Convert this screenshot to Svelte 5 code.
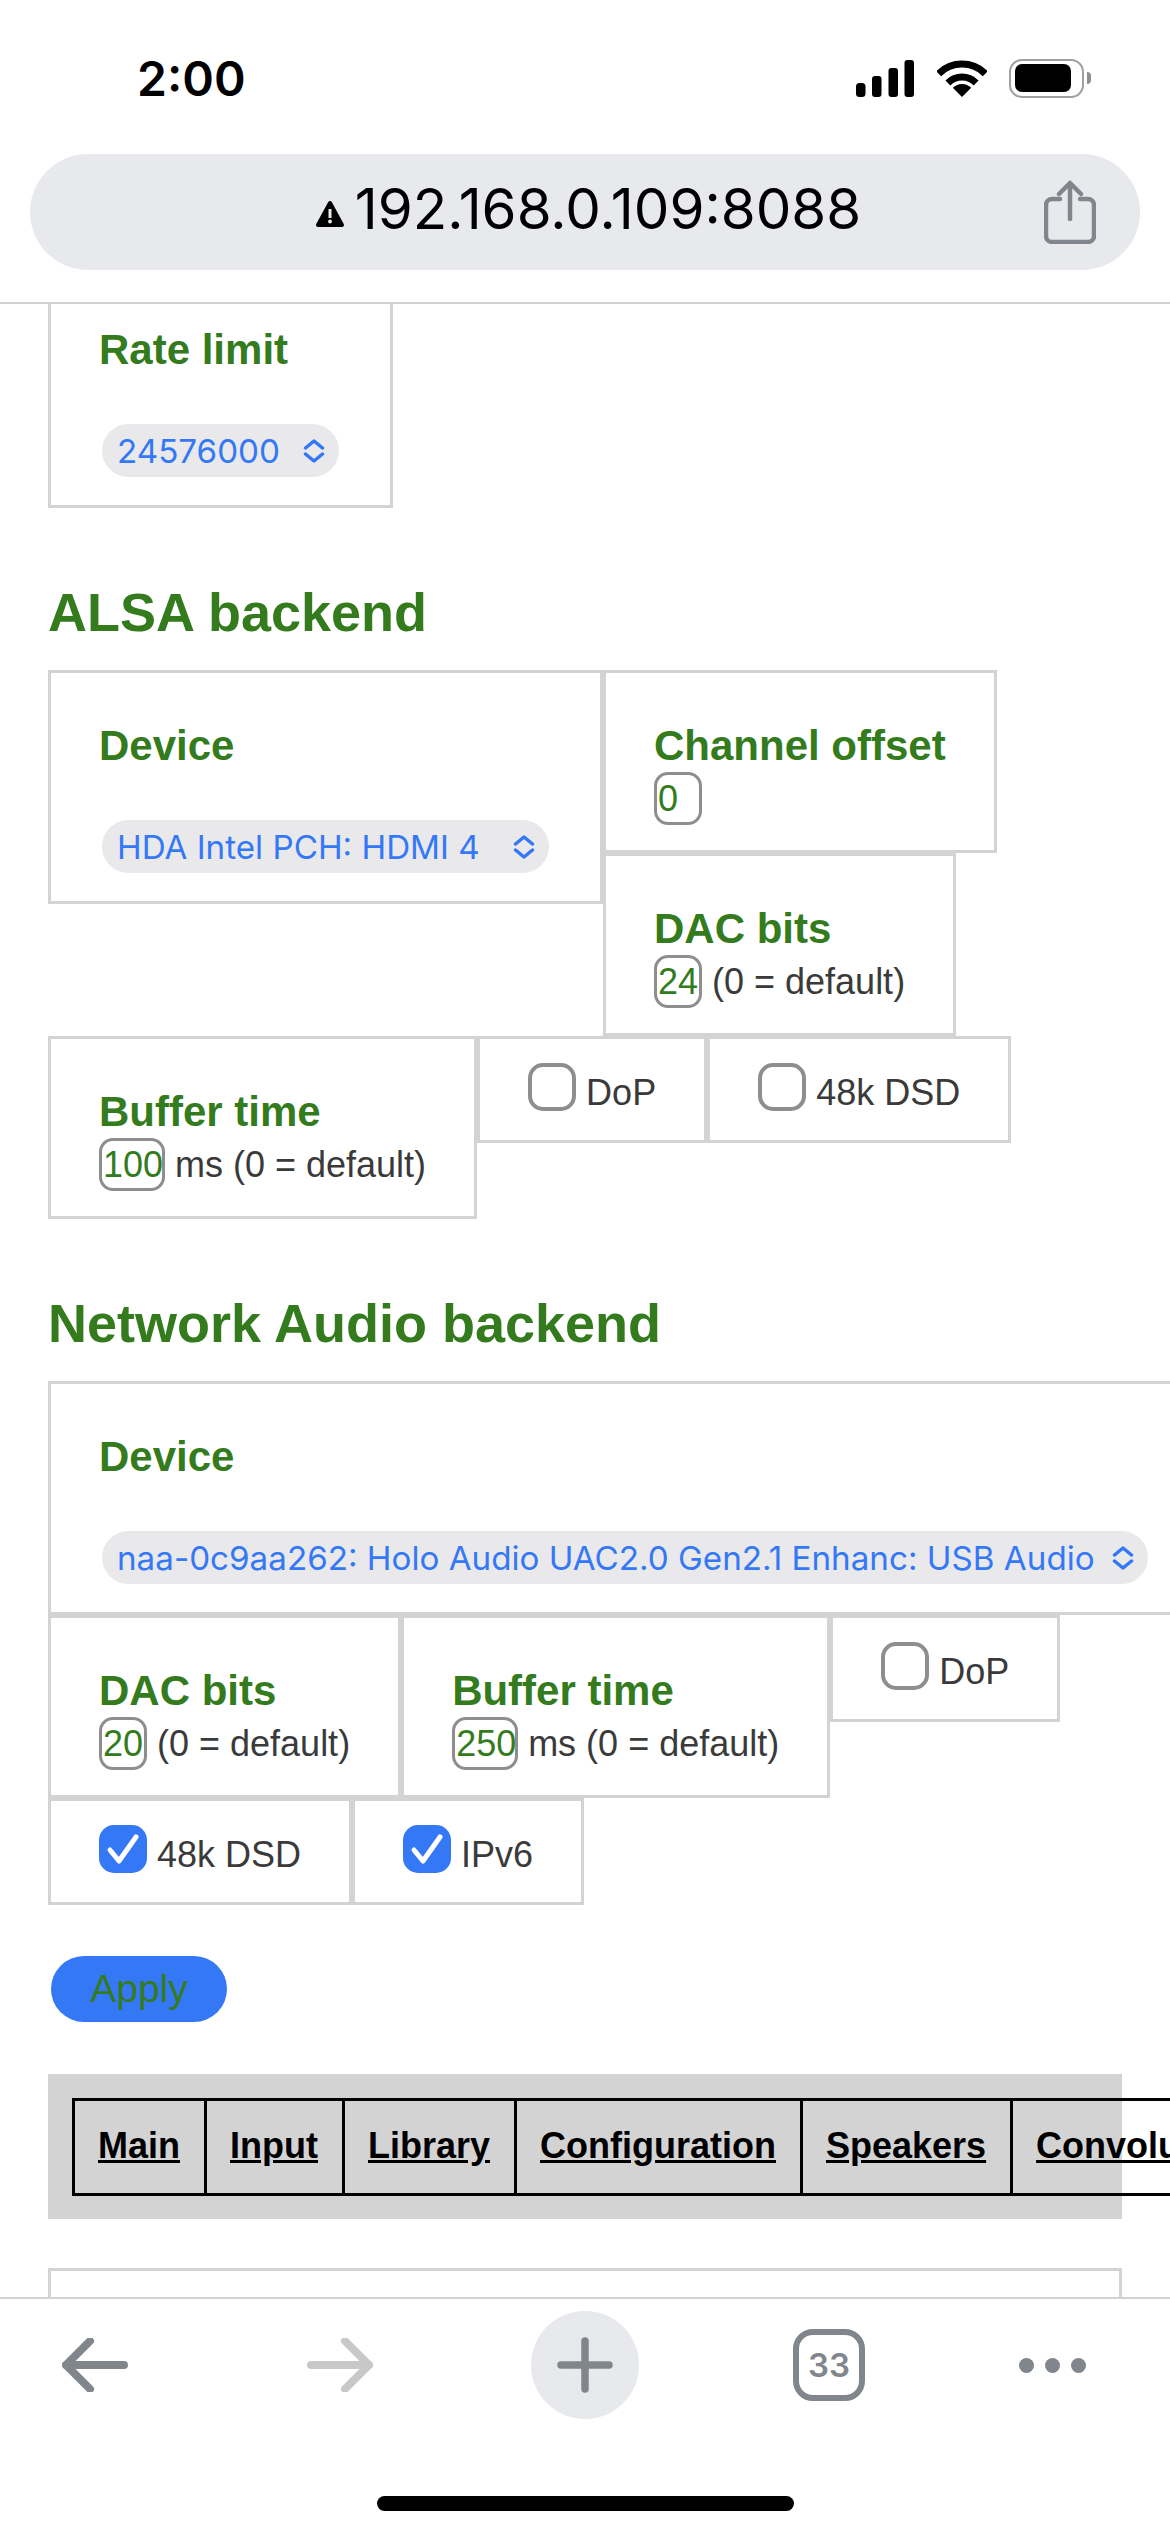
<script>
  const tabs = ['Main', 'Input', 'Library', 'Configuration', 'Speakers', 'Convolution'];
</script>

{#snippet chevron()}
  <svg class="chev" viewBox="0 0 22 24" aria-hidden="true"><path d="M2.5 9 11 2l8.500 7M2.500 15 11 22l8.500-7" /></svg>
{/snippet}

{#snippet check(on)}
  <span class="cb" class:on>
    {#if on}<svg viewBox="0 0 48 48" aria-hidden="true"><path d="M11 25l9 11 17-24" /></svg>{/if}
  </span>
{/snippet}

<div class="phone">
  <header class="chrome-top">
    <div class="status">
      <span class="time">2:00</span>
      <div class="status-icons">
        <svg class="signal" viewBox="0 0 58 37" aria-hidden="true">
          <rect x="0" y="23" width="9.500" height="14" rx="3.500" />
          <rect x="16" y="16" width="9.500" height="21" rx="3" />
          <rect x="32.500" y="8" width="9.500" height="29" rx="3" />
          <rect x="48.500" y="0" width="9.500" height="37" rx="3" />
        </svg>
        <svg class="wifi" viewBox="0 0 50 37" aria-hidden="true">
          <path class="arc" d="M1.700 13.700a33 33 0 0 1 46.600 0" />
          <path class="arc" d="M10.900 22.900a20 20 0 0 1 28.200 0" />
          <path d="M25 37 15.800 27.800a13 13 0 0 1 18.400 0z" />
        </svg>
        <div class="battery"><div class="level"></div></div>
        <div class="cap"></div>
      </div>
    </div>
    <div class="url">
      <span></span>
      <div class="address">
        <svg class="warn" viewBox="0 0 30 28" aria-hidden="true">
          <path class="tri" d="M15 3 27 25H3z" />
          <rect x="13.500" y="9" width="3" height="9" fill="#e8e9ed" />
          <circle cx="15" cy="21.500" r="1.900" fill="#e8e9ed" />
        </svg>
        <span>192.168.0.109:8088</span>
      </div>
      <svg class="share" viewBox="0 0 52 64" aria-hidden="true">
        <path d="M26 5v34M15 14 26 3l11 11M16 19H8a6 6 0 0 0-6 6v31a6 6 0 0 0 6 6h36a6 6 0 0 0 6-6V25a6 6 0 0 0-6-6h-8" />
      </svg>
    </div>
  </header>

  <main class="page">
    <section class="box big rate">
      <div class="label">Rate limit</div>
      <div class="select w-rate"><span>24576000</span>{@render chevron()}</div>
    </section>

    <h3>ALSA backend</h3>
    <div class="row">
      <section class="box big">
        <div class="label">Device</div>
        <div class="select w-hda"><span>HDA Intel PCH: HDMI 4</span>{@render chevron()}</div>
      </section>
      <div class="stack">
        <section class="box w-channel">
          <div class="label">Channel offset</div>
          <div class="field"><input class="num n2" value="0" /></div>
        </section>
        <section class="box">
          <div class="label">DAC bits</div>
          <div class="field"><input class="num n2" value="24" /><span>(0 = default)</span></div>
        </section>
      </div>
    </div>
    <div class="row">
      <section class="box">
        <div class="label">Buffer time</div>
        <div class="field"><input class="num n3" value="100" /><span>ms (0 = default)</span></div>
      </section>
      <label class="box opt">{@render check(false)}<span>DoP</span></label>
      <label class="box opt">{@render check(false)}<span>48k DSD</span></label>
    </div>

    <h3>Network Audio backend</h3>
    <section class="box big wide">
      <div class="label">Device</div>
      <div class="select w-naa"><span>naa-0c9aa262: Holo Audio UAC2.0 Gen2.1 Enhanc: USB Audio</span>{@render chevron()}</div>
    </section>
    <div class="row">
      <section class="box">
        <div class="label">DAC bits</div>
        <div class="field"><input class="num n2" value="20" /><span>(0 = default)</span></div>
      </section>
      <section class="box">
        <div class="label">Buffer time</div>
        <div class="field"><input class="num n3" value="250" /><span>ms (0 = default)</span></div>
      </section>
      <label class="box opt">{@render check(false)}<span>DoP</span></label>
    </div>
    <div class="row">
      <label class="box opt">{@render check(true)}<span>48k DSD</span></label>
      <label class="box opt">{@render check(true)}<span>IPv6</span></label>
    </div>

    <button class="apply">Apply</button>

    <nav class="nav">
      <div class="tabs">
        {#each tabs as t}
          <a href="#top">{t}</a>
        {/each}
      </div>
    </nav>

    <section class="box next"></section>
  </main>

  <footer class="chrome-bottom">
    <div class="toolbar">
      <svg class="arrow" viewBox="0 0 66 54" aria-hidden="true"><path d="M4 27h58M28 3 4 27l24 24" /></svg>
      <svg class="arrow off" viewBox="0 0 66 54" aria-hidden="true"><path d="M62 27H4M38 3l24 24-24 24" /></svg>
      <div class="plus"><svg viewBox="0 0 56 56" aria-hidden="true"><path d="M28 4v48M4 28h48" /></svg></div>
      <div class="count">33</div>
      <div class="more"><i></i><i></i><i></i></div>
    </div>
    <div class="home"></div>
  </footer>
</div>

<style>
  :global(body) { margin: 0; background: #fff; }
  .phone {
    width: 1170px; height: 2532px; display: flex; flex-direction: column; overflow: hidden;
    font-family: "Liberation Sans", Arial, sans-serif; font-size: 36px; color: #3a3a3a; background: #fff;
  }
  .chrome-top { height: 304px; flex: none; box-sizing: border-box; border-bottom: 2px solid #d2d2d2; }
  .status { height: 154px; display: flex; align-items: center; justify-content: space-between; padding: 2px 79px 0 137px; box-sizing: border-box; }
  .time { font-family: Inter, sans-serif; font-weight: 600; font-size: 48px; color: #000; }
  .status-icons { display: flex; align-items: center; }
  .signal { width: 58px; height: 37px; fill: #000; margin-right: 23px; }
  .wifi { width: 50px; height: 37px; margin-right: 22px; fill: #000; }
  .wifi .arc { fill: none; stroke: #000; stroke-width: 7; }
  .battery { width: 75px; height: 39px; box-sizing: border-box; border: 2.500px solid #a0a0a0; border-radius: 13px; padding: 3.500px; padding-right: 11px; }
  .level { height: 100%; background: #000; border-radius: 7px; }
  .cap { width: 4px; height: 12px; margin-left: 3px; background: #8e8e8e; border-radius: 0 6px 6px 0; }

  .url { margin: 0 30px; height: 116px; border-radius: 58px; background: #e8e9ed; display: grid; grid-template-columns: 1fr auto 1fr; align-items: center; color: #000; }
  .address { display: flex; align-items: center; font-family: Inter, sans-serif; font-size: 56.500px; line-height: 110px; gap: 10px; margin: 0 0 6px 6px; }
  .warn { width: 30px; height: 28px; margin-top: 10px; }
  .warn .tri { fill: #000; stroke: #000; stroke-width: 4; stroke-linejoin: round; }
  .share { width: 52px; height: 64px; justify-self: end; margin-right: 44px; fill: none; stroke: #80868b; stroke-width: 4.500; stroke-linecap: round; stroke-linejoin: round; }

  .page { flex: 1; min-height: 0; overflow: hidden; padding-left: 48px; }
  .box { display: block; flex: none; box-sizing: border-box; width: max-content; height: 183px; border: 3px solid #d3d3d3; padding: 24px 48px 0; }
  .big { height: 234px; }
  .rate { margin-top: -30px; }
  .wide { width: 1154px; }
  .row { display: flex; align-items: flex-start; }
  .stack { display: flex; flex-direction: column; }
  h3 { margin: 73px 0 27px; font-size: 54px; line-height: 62px; font-weight: 700; color: #347b1e; }
  .label { margin-top: 25px; font-size: 42px; line-height: 48px; font-weight: 700; color: #347b1e; }
  .select {
    margin: 50px 3px 0; height: 53px; box-sizing: border-box; padding: 0 14px 0 15px; border-radius: 27px; background: #e9e9eb;
    display: flex; align-items: center; justify-content: space-between; font-family: Inter, sans-serif; font-size: 33.200px; color: #3478f6;
  }
  .w-rate { width: 237px; }
  .w-hda { width: 447px; }
  .w-naa { width: 1046px; }
  .chev { width: 22px; height: 24px; flex: none; fill: none; stroke: #3478f6; stroke-width: 3.500; stroke-linecap: round; stroke-linejoin: round; }
  .w-channel { width: 394px; }
  .field { display: flex; align-items: baseline; gap: 10px; margin-top: 2px; }
  .num {
    box-sizing: border-box; height: 53px; margin: 0; padding: 0 0 0 1px; border: 3px solid #8e8e8e; border-radius: 14px; background: #fff; outline: none;
    font: 36px "Liberation Sans", Arial, sans-serif; color: #347b1e;
  }
  .n2 { width: 48px; }
  .n3 { width: 66px; }
  .opt { height: 107px; display: flex; align-items: flex-start; gap: 10px; }
  .opt span:last-child { line-height: 48px; margin-top: 6px; }
  .cb { width: 48px; height: 48px; box-sizing: border-box; border: 4.500px solid #8e8e8e; border-radius: 15px; background: #fff; display: block; flex: none; }
  .cb.on { border: 0; background: #3478f6; }
  .cb svg { display: block; width: 48px; height: 48px; fill: none; stroke: #fff; stroke-width: 5; stroke-linecap: round; stroke-linejoin: round; }

  .apply { display: block; margin: 51px 0 0 3px; padding: 0; width: 176px; height: 66px; border: 0; border-radius: 33px; background: #3478f6; color: #347b1e; font: 39px "Liberation Sans", Arial, sans-serif; }
  .nav { margin-top: 52px; width: 1074px; height: 145px; box-sizing: border-box; background: #d3d3d3; padding: 24px 0 0 24px; }
  .tabs { display: flex; width: max-content; height: 98px; box-sizing: border-box; border: 3px solid #000; }
  .tabs a { padding: 0 24px 0 23px; line-height: 90px; font-size: 36px; font-weight: 700; color: #000; text-decoration: underline; border-left: 3px solid #000; }
  .tabs a:first-child { border-left: 0; }
  .next { margin-top: 49px; width: 1074px; height: 120px; }

  .chrome-bottom { height: 235px; flex: none; box-sizing: border-box; border-top: 2px solid #d2d2d2; background: #fff; }
  .toolbar { display: grid; grid-template-columns: 245px 224px 262px 226px auto; align-items: center; height: 108px; padding: 12px 0 0 62px; }
  .arrow { width: 66px; height: 54px; fill: none; stroke: #80868b; stroke-width: 8; stroke-linecap: round; stroke-linejoin: round; }
  .arrow.off { stroke: #c8c8c8; }
  .plus { width: 108px; height: 108px; border-radius: 50%; background: #e8e9ed; display: flex; align-items: center; justify-content: center; }
  .plus svg { width: 56px; height: 56px; fill: none; stroke: #80868b; stroke-width: 7.500; stroke-linecap: round; }
  .count { width: 72px; height: 72px; box-sizing: border-box; border: 6px solid #80868b; border-radius: 20px; display: flex; align-items: center; justify-content: center; font-family: Inter, sans-serif; font-weight: 600; font-size: 33px; color: #80868b; }
  .more { display: flex; gap: 11px; }
  .more i { display: block; width: 15px; height: 15px; border-radius: 50%; background: #80868b; }
  .home { width: 417px; height: 15px; margin: 77px auto 0; border-radius: 8px; background: #000; }
</style>
